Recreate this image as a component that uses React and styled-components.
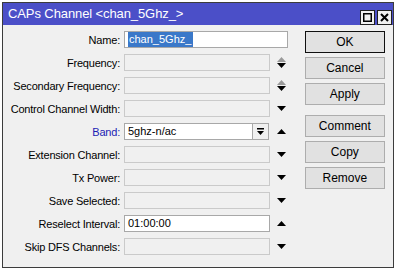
import React from 'react'
import styled, { createGlobalStyle } from 'styled-components'

const Global = createGlobalStyle`
  html, body { margin: 0; padding: 0; background: #fff; }
  body { font-family: "Liberation Sans", Arial, sans-serif; }
`

const Page = styled.div`
  width: 395px;
  height: 271px;
  padding: 2px 1px 0 2px;
  box-sizing: border-box;
  overflow: hidden;
`

const Window = styled.div`
  width: 392px;
  height: 266px;
  box-sizing: border-box;
  border: 1px solid #3c3c3c;
  background: #f0f0f0;
  display: flex;
  flex-direction: column;
`

const TitleBar = styled.div`
  height: 22px;
  background: #4b4fc8;
  display: flex;
  align-items: center;
  padding: 0 1px 0 5px;
  color: #fff;
  font-size: 13px;
`

const Title = styled.div`
  flex: 1;
  padding-bottom: 2px;
  letter-spacing: -0.1px;
`

const TitleButton = styled.div`
  width: 13px;
  height: 13px;
  margin: 7px 0 0 2px;
  border: 1px solid #202020;
  background: #f0f0f0;
  display: flex;
  align-items: center;
  justify-content: center;
`

const Body = styled.div`
  flex: 1;
  display: flex;
  padding: 6px 8px 0 0;
`

const Form = styled.div`
  width: 300px;
  display: flex;
  flex-direction: column;
  gap: 6px;
`

const Row = styled.div`
  display: flex;
  align-items: center;
  height: 17px;
`

const Label = styled.div`
  width: 117px;
  margin-right: 4px;
  text-align: right;
  font-size: 11px;
  letter-spacing: -0.2px;
  color: ${p => (p.$blue ? '#1c1cb4' : '#000')};
  white-space: nowrap;
`

const Input = styled.div`
  width: ${p => p.$w || 146}px;
  height: 17px;
  box-sizing: border-box;
  border: 1px solid ${p => (p.$on ? '#a8a8a8' : '#cacaca')};
  background: ${p => (p.$on ? '#fff' : '#f0f0f0')};
  font-size: 11px;
  line-height: 15px;
  padding-left: 3px;
  display: flex;
  align-items: center;
`

const Selected = styled.span`
  background: #3a78c9;
  color: #fff;
  padding: 0 2px 0 1px;
  line-height: 15px;
`

const DropButton = styled.div`
  width: 16px;
  height: 17px;
  box-sizing: border-box;
  border: 1px solid #a8a8a8;
  border-left: none;
  background: #f0f0f0;
  display: flex;
  align-items: center;
  justify-content: center;
`

const ArrowCell = styled.div`
  width: ${p => p.$w || 22}px;
  display: flex;
  flex-direction: column;
  align-items: center;
  justify-content: center;
  gap: 1px;
`

const Buttons = styled.div`
  margin-left: 4px;
  width: 81px;
  display: flex;
  flex-direction: column;
  gap: 4px;
`

const Button = styled.div`
  height: 22px;
  box-sizing: border-box;
  border: 1px solid ${p => (p.$default ? '#101010' : '#adadad')};
  box-shadow: ${p => (p.$default ? 'inset 0 0 0 1px #e1e1e1' : 'none')};
  background: #e1e1e1;
  display: flex;
  align-items: center;
  justify-content: center;
  font-size: 12px;
  color: #000;
  margin-top: ${p => (p.$gap ? '6px' : '0')};
`

const Tri = ({ up, color = '#000' }) => (
  <svg width="9" height="5" viewBox="0 0 9 5">
    <polygon points={up ? '0,5 9,5 4.5,0' : '0,0 9,0 4.5,5'} fill={color} />
  </svg>
)

const Arrows = ({ kind, w }) => {
  if (kind === 'updown')
    return (
      <ArrowCell $w={w}>
        <Tri up color="#9a9a9a" />
        <Tri />
      </ArrowCell>
    )
  return (
    <ArrowCell $w={w}>
      <Tri up={kind === 'up'} />
    </ArrowCell>
  )
}

const rows = [
  { label: 'Frequency', arrows: 'updown' },
  { label: 'Secondary Frequency', arrows: 'updown' },
  { label: 'Control Channel Width', arrows: 'down' },
  { label: 'Band', value: '5ghz-n/ac', arrows: 'up', blue: true, drop: true },
  { label: 'Extension Channel', arrows: 'down' },
  { label: 'Tx Power', arrows: 'down' },
  { label: 'Save Selected', arrows: 'down' },
  { label: 'Reselect Interval', value: '01:00:00', arrows: 'up' },
  { label: 'Skip DFS Channels', arrows: 'down' },
]

const App = () => {
  return (
    <Page>
      <Global />
      <Window>
        <TitleBar>
          <Title>CAPs Channel &lt;chan_5Ghz_&gt;</Title>
          <TitleButton>
            <svg width="9" height="9" viewBox="0 0 9 9">
              <rect x="0.75" y="0.75" width="7.5" height="7.5" fill="none" stroke="#000" strokeWidth="1.5" />
            </svg>
          </TitleButton>
          <TitleButton>
            <svg width="9" height="9" viewBox="0 0 9 9">
              <path d="M1 1 L8 8 M8 1 L1 8" stroke="#000" strokeWidth="2" />
            </svg>
          </TitleButton>
        </TitleBar>
        <Body>
          <Form>
            <Row>
              <Label>Name:</Label>
              <Input $on $w={164}>
                <Selected>chan_5Ghz_</Selected>
              </Input>
            </Row>
            {rows.map(r => (
              <Row key={r.label}>
                <Label $blue={r.blue}>{r.label}:</Label>
                <Input $on={!!r.value} $w={r.drop ? 129 : 146}>
                  {r.value}
                </Input>
                {r.drop && (
                  <DropButton>
                    <svg width="9" height="9" viewBox="0 0 9 9">
                      <rect x="1" y="1" width="7" height="1.5" fill="#000" />
                      <polygon points="1,4 8,4 4.5,8" fill="#000" />
                    </svg>
                  </DropButton>
                )}
                <Arrows kind={r.arrows} w={r.drop ? 25 : 22} />
              </Row>
            ))}
          </Form>
          <Buttons>
            <Button $default>OK</Button>
            <Button>Cancel</Button>
            <Button>Apply</Button>
            <Button $gap>Comment</Button>
            <Button>Copy</Button>
            <Button>Remove</Button>
          </Buttons>
        </Body>
      </Window>
    </Page>
  )
}

export default App
